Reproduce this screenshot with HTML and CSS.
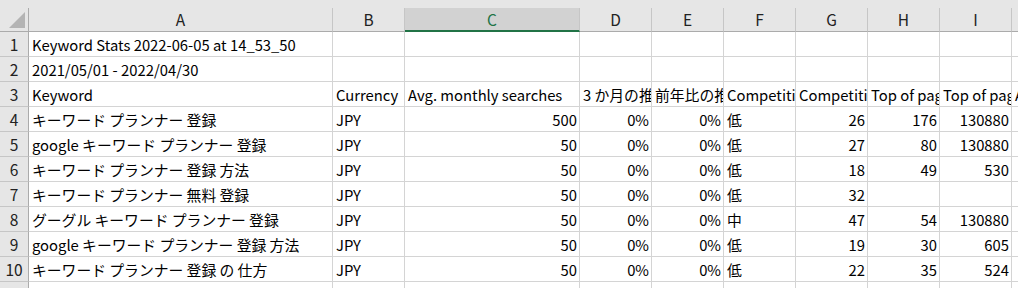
FILE: index.html
```html
<!DOCTYPE html>
<html lang="ja">
<head>
    <meta charset="UTF-8">
    <title>Keyword Stats 2022-06-05 at 14_53_50</title>
    <link rel="stylesheet" href="styles.css">
</head>
<body>
    <div class="sheet">
        <table class="grid">
            <colgroup>
                <col class="col-rowhead">
                <col class="col-a">
                <col class="col-b">
                <col class="col-c">
                <col class="col-n">
                <col class="col-n">
                <col class="col-n">
                <col class="col-n">
                <col class="col-n">
                <col class="col-n">
                <col class="col-n">
            </colgroup>
            <thead>
                <tr>
                    <th class="corner"><span class="corner-tri"></span></th>
                    <th>A</th>
                    <th>B</th>
                    <th class="active">C</th>
                    <th>D</th>
                    <th>E</th>
                    <th>F</th>
                    <th>G</th>
                    <th>H</th>
                    <th>I</th>
                    <th>J</th>
                </tr>
            </thead>
            <tbody>
                <tr>
                    <th>1</th>
                    <td>Keyword Stats 2022-06-05 at 14_53_50</td>
                    <td></td><td></td><td></td><td></td><td></td><td></td><td></td><td></td><td></td>
                </tr>
                <tr>
                    <th>2</th>
                    <td>2021/05/01 - 2022/04/30</td>
                    <td></td><td></td><td></td><td></td><td></td><td></td><td></td><td></td><td></td>
                </tr>
                <tr>
                    <th>3</th>
                    <td>Keyword</td>
                    <td>Currency</td>
                    <td>Avg. monthly searches</td>
                    <td>3 か月の推移</td>
                    <td>前年比の推移</td>
                    <td>Competition</td>
                    <td>Competition (indexed value)</td>
                    <td>Top of page bid (low range)</td>
                    <td>Top of page bid (high range)</td>
                    <td>Ad impression share</td>
                </tr>
                <tr>
                    <th>4</th>
                    <td>キーワード プランナー 登録</td>
                    <td>JPY</td>
                    <td class="num">500</td>
                    <td class="num">0%</td>
                    <td class="num">0%</td>
                    <td>低</td>
                    <td class="num">26</td>
                    <td class="num">176</td>
                    <td class="num">130880</td>
                    <td></td>
                </tr>
                <tr>
                    <th>5</th>
                    <td>google キーワード プランナー 登録</td>
                    <td>JPY</td>
                    <td class="num">50</td>
                    <td class="num">0%</td>
                    <td class="num">0%</td>
                    <td>低</td>
                    <td class="num">27</td>
                    <td class="num">80</td>
                    <td class="num">130880</td>
                    <td></td>
                </tr>
                <tr>
                    <th>6</th>
                    <td>キーワード プランナー 登録 方法</td>
                    <td>JPY</td>
                    <td class="num">50</td>
                    <td class="num">0%</td>
                    <td class="num">0%</td>
                    <td>低</td>
                    <td class="num">18</td>
                    <td class="num">49</td>
                    <td class="num">530</td>
                    <td></td>
                </tr>
                <tr>
                    <th>7</th>
                    <td>キーワード プランナー 無料 登録</td>
                    <td>JPY</td>
                    <td class="num">50</td>
                    <td class="num">0%</td>
                    <td class="num">0%</td>
                    <td>低</td>
                    <td class="num">32</td>
                    <td></td>
                    <td></td>
                    <td></td>
                </tr>
                <tr>
                    <th>8</th>
                    <td>グーグル キーワード プランナー 登録</td>
                    <td>JPY</td>
                    <td class="num">50</td>
                    <td class="num">0%</td>
                    <td class="num">0%</td>
                    <td>中</td>
                    <td class="num">47</td>
                    <td class="num">54</td>
                    <td class="num">130880</td>
                    <td></td>
                </tr>
                <tr>
                    <th>9</th>
                    <td>google キーワード プランナー 登録 方法</td>
                    <td>JPY</td>
                    <td class="num">50</td>
                    <td class="num">0%</td>
                    <td class="num">0%</td>
                    <td>低</td>
                    <td class="num">19</td>
                    <td class="num">30</td>
                    <td class="num">605</td>
                    <td></td>
                </tr>
                <tr>
                    <th>10</th>
                    <td>キーワード プランナー 登録 の 仕方</td>
                    <td>JPY</td>
                    <td class="num">50</td>
                    <td class="num">0%</td>
                    <td class="num">0%</td>
                    <td>低</td>
                    <td class="num">22</td>
                    <td class="num">35</td>
                    <td class="num">524</td>
                    <td></td>
                </tr>
                <tr>
                    <th>11</th>
                    <td></td><td></td><td></td><td></td><td></td><td></td><td></td><td></td><td></td><td></td>
                </tr>
            </tbody>
        </table>
    </div>
</body>
</html>
```

FILE: styles.css
```css
* {
    margin: 0;
    padding: 0;
    box-sizing: border-box;
}

body {
    background-color: #FFFFFF;
    font-family: 'Noto Sans CJK JP', 'Noto Sans', sans-serif;
    font-size: 14.8px;
    color: #000000;
    overflow: hidden;
}

.sheet {
    width: 1018px;
    height: 288px;
    overflow: hidden;
    background-color: #E6E6E6;
    padding-top: 8px;
}

.grid {
    border-collapse: separate;
    border-spacing: 0;
    table-layout: fixed;
    width: 1084px;
    background-color: #FFFFFF;
}

.col-rowhead { width: 29px; }
.col-a { width: 304px; }
.col-b { width: 72px; }
.col-c { width: 175px; }
.col-n { width: 72px; }

th, td {
    height: 25px;
    border-right: 1px solid #D4D4D4;
    border-bottom: 1px solid #D4D4D4;
    white-space: nowrap;
    overflow: hidden;
    line-height: 23px;
    padding: 1px 2px 0 3px;
    text-align: left;
    font-weight: normal;
}

thead th {
    height: 24px;
    background-color: #E6E6E6;
    text-align: center;
    color: #222222;
    font-size: 15.5px;
    border-bottom: 1px solid #ABABAB;
    border-right: 1px solid #C6C6C6;
    padding: 0;
}

thead th.active {
    background-color: #D2D2D2;
    color: #217346;
    border-bottom: 2px solid #217346;
    line-height: 22px;
}

tbody th {
    background-color: #E6E6E6;
    text-align: center;
    color: #222222;
    font-size: 15.5px;
    padding: 1px 0 0;
    border-right: 1px solid #ABABAB;
    border-bottom: 1px solid #C6C6C6;
}

thead th.corner {
    position: relative;
    border-right: 1px solid #ABABAB;
}

.corner-tri {
    position: absolute;
    right: 3px;
    bottom: 3px;
    width: 0;
    height: 0;
    border-left: 16px solid transparent;
    border-bottom: 16px solid #B4B4B4;
}

td.num {
    text-align: right;
}
```
